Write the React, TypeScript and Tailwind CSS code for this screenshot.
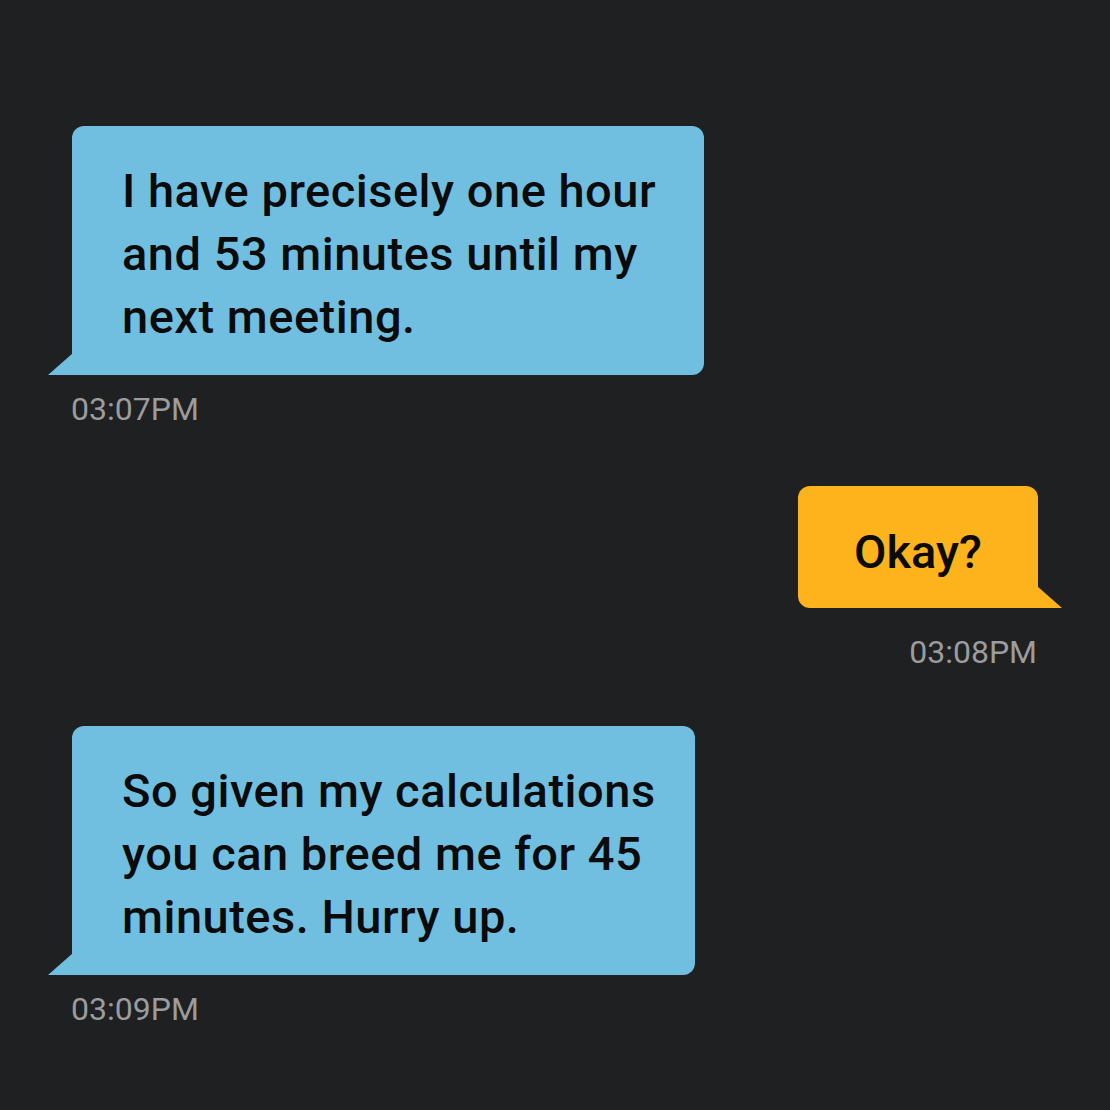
import React from "react";

const font = { fontFamily: "Roboto, 'Noto Sans', sans-serif" };

function LeftTail() {
  return (
    <svg className="absolute bottom-0 -left-[24px]" width="25" height="22" viewBox="0 0 25 22">
      <polygon points="0,22 25,0 25,22" fill="#71bfe0" />
    </svg>
  );
}

function RightTail() {
  return (
    <svg className="absolute bottom-0 -right-[24px]" width="25" height="22" viewBox="0 0 25 22">
      <polygon points="0,0 25,22 0,22" fill="#fdb31b" />
    </svg>
  );
}

export default function App() {
  return (
    <div
      className="w-full h-[1110px] overflow-hidden bg-[#1f2022] flex flex-col"
      style={font}
    >
      <div className="pt-[126px] pl-[72px] flex flex-col items-start">
        <div className="relative w-[632px] bg-[#71bfe0] rounded-t-[12px] rounded-br-[12px] pt-[33px] pb-[27px] pl-[50px] text-[47px] leading-[63px] font-medium text-[#0b0b0b] tracking-[0.5px]">
          <div className="whitespace-nowrap">I have precisely one hour</div>
          <div className="whitespace-nowrap">and 53 minutes until my</div>
          <div className="whitespace-nowrap">next meeting.</div>
          <LeftTail />
        </div>
        <div className="mt-[18px] text-[32px] leading-[32px] text-[#9b9c9e] -ml-[1px]">03:07PM</div>
      </div>

      <div className="mt-[61px] pr-[72px] flex flex-col items-end">
        <div className="relative w-[240px] h-[122px] bg-[#fdb31b] rounded-t-[12px] rounded-bl-[12px] pt-[34px] text-center text-[47px] leading-[63px] font-medium text-[#0b0b0b]">
          Okay?
          <RightTail />
        </div>
        <div className="mt-[28px] text-[32px] leading-[32px] text-[#9b9c9e] pr-[1px]">03:08PM</div>
      </div>

      <div className="mt-[58px] pl-[72px] flex flex-col items-start">
        <div className="relative w-[623px] bg-[#71bfe0] rounded-t-[12px] rounded-br-[12px] pt-[33px] pb-[27px] pl-[50px] text-[47px] leading-[63px] font-medium text-[#0b0b0b] tracking-[0.5px]">
          <div className="whitespace-nowrap">So given my calculations</div>
          <div className="whitespace-nowrap">you can breed me for 45</div>
          <div className="whitespace-nowrap">minutes. Hurry up.</div>
          <LeftTail />
        </div>
        <div className="mt-[18px] text-[32px] leading-[32px] text-[#9b9c9e] -ml-[1px]">03:09PM</div>
      </div>
    </div>
  );
}
